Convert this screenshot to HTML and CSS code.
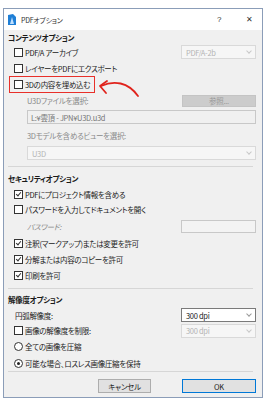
FILE: index.html
```html
<!DOCTYPE html>
<html lang="ja">
<head>
  <meta charset="UTF-8" />
  <title>PDFオプション</title>
  <link rel="stylesheet" href="styles.css">
</head>
<body>
  <div class="window">
    <!-- タイトルバー -->
    <div class="titlebar">
      <svg class="app-icon" width="8" height="11" viewBox="0 0 8 11">
        <path d="M0 1 L5 0 L8 3 L8 11 L0 11 Z" fill="#1f7fd6"/>
        <path d="M4 3 L6 10 L2 10 Z" fill="#bfe0ff"/>
      </svg>
      <span class="title">PDFオプション</span>
      <span class="help">?</span>
      <span class="close">✕</span>
    </div>

    <div class="body">
      <div class="group-title h-content">コンテンツオプション</div>

      <div class="row h16">
        <label class="check"><span class="box"></span>PDF/A アーカイブ</label>
        <div class="combo disabled">PDF/A-2b<span class="chev"></span></div>
      </div>
      <div class="row h16">
        <label class="check"><span class="box"></span>レイヤーをPDFにエクスポート</label>
      </div>
      <div class="row h17 row-mark">
        <label class="check highlight"><span class="box"></span>3Dの内容を埋め込む</label>
        <svg class="arrow" width="44" height="20" viewBox="0 0 44 20">
          <path d="M3 7 C16 1 30 3 40 17" fill="none" stroke="#e0231c" stroke-width="1.8" stroke-linecap="round"/>
          <path d="M9 2 L2 7 L8 14" fill="none" stroke="#e0231c" stroke-width="1.8" stroke-linecap="round" stroke-linejoin="round"/>
        </svg>
      </div>
      <div class="row h15 indent">
        <span class="muted">U3Dファイルを選択:</span>
        <div class="button disabled">参照...</div>
      </div>
      <div class="row h18 indent">
        <div class="field wide">L:¥雲頂 - JPN¥U3D.u3d</div>
      </div>
      <div class="row h19 indent">
        <span class="muted">3Dモデルを含めるビューを選択:</span>
      </div>
      <div class="row h16 indent">
        <div class="combo disabled wide">U3D<span class="chev"></span></div>
      </div>

      <div class="separator"></div>

      <div class="group-title h-security">セキュリティオプション</div>
      <div class="row h16">
        <label class="check"><span class="box checked"></span>PDFにプロジェクト情報を含める</label>
      </div>
      <div class="row h15">
        <label class="check"><span class="box"></span>パスワードを入力してドキュメントを開く</label>
      </div>
      <div class="row h18 indent">
        <span class="muted italic">パスワード:</span>
        <div class="field small"></div>
      </div>
      <div class="row h16">
        <label class="check"><span class="box checked"></span>注釈(マークアップ)または変更を許可</label>
      </div>
      <div class="row h16">
        <label class="check"><span class="box checked"></span>分解または内容のコピーを許可</label>
      </div>
      <div class="row h16">
        <label class="check"><span class="box checked"></span>印刷を許可</label>
      </div>

      <div class="separator"></div>

      <div class="group-title h-res">解像度オプション</div>
      <div class="row h16">
        <span class="plain">円弧解像度:</span>
        <div class="combo">300 dpi<span class="chev"></span></div>
      </div>
      <div class="row h15">
        <label class="check"><span class="box"></span>画像の解像度を制限:</label>
        <div class="combo disabled">300 dpi<span class="chev"></span></div>
      </div>
      <div class="row h17">
        <label class="check"><span class="radio"></span>全ての画像を圧縮</label>
      </div>
      <div class="row h16">
        <label class="check"><span class="radio selected"></span>可能な場合、ロスレス画像圧縮を保持</label>
      </div>

      <div class="separator last"></div>

      <div class="actions">
        <div class="button cancel">キャンセル</div>
        <div class="button ok">OK</div>
      </div>
    </div>
  </div>
</body>
</html>
```

FILE: styles.css
```css
body {
  margin: 0;
  padding: 8px 0 0 3px;
  background: #fff;
  font-family: "Noto Sans CJK JP", "Noto Sans", sans-serif;
  font-size: 7.5px;
  letter-spacing: -0.3px;
  font-feature-settings: "palt";
  color: #1a1a1a;
}

.window {
  width: 258px;
  height: 388px;
  border: 1px solid #8b9db8;
  background: #f0f0f0;
  display: flex;
  flex-direction: column;
}

/* タイトルバー */
.titlebar {
  height: 21px;
  background: #fff;
  display: flex;
  align-items: center;
  padding-left: 4px;
}
.app-icon {
  margin-right: 5px;
}
.title {
  font-size: 7px;
  color: #333;
  flex: 1;
}
.help {
  font-family: "Liberation Sans", sans-serif;
  font-size: 8px;
  color: #333;
  width: 29px;
}
.close {
  font-family: "DejaVu Sans", sans-serif;
  font-size: 8px;
  color: #333;
  width: 16px;
}

.body {
  padding: 0 6px 0 0;
  display: flex;
  flex-direction: column;
}

.group-title {
  font-weight: bold;
  padding-left: 4px;
  display: flex;
  align-items: center;
}
.h-content { height: 14px; }
.h-security { height: 16px; }
.h-res { height: 15px; }

.row {
  display: flex;
  align-items: center;
  justify-content: space-between;
  padding-left: 10px;
}
.row.indent { padding-left: 23px; }
.h15 { height: 15px; }
.h16 { height: 16px; }
.h17 { height: 17px; }
.h18 { height: 18px; }
.h19 { height: 19px; }

.check {
  display: flex;
  align-items: center;
  white-space: nowrap;
}
.plain { padding-left: 1px; }
.muted { color: #8a8a8a; }
.italic { font-style: italic; }

/* チェックボックス・ラジオ */
.box, .radio {
  width: 7px;
  height: 7px;
  border: 1px solid #333;
  background: #fff;
  margin-right: 2px;
  position: relative;
  flex-shrink: 0;
}
.radio { border-radius: 50%; }
.box.checked::after {
  content: "";
  position: absolute;
  left: 2px;
  top: 0;
  width: 2px;
  height: 4px;
  border: solid #333;
  border-width: 0 1px 1px 0;
  transform: rotate(40deg);
}
.radio.selected::after {
  content: "";
  position: absolute;
  left: 2px;
  top: 2px;
  width: 3px;
  height: 3px;
  border-radius: 50%;
  background: #222;
}

/* 強調表示 */
.row-mark {
  position: relative;
  padding-left: 5px;
  justify-content: flex-start;
}
.highlight {
  border: 1px solid #e8302a;
  padding: 2px 4px 2px 4px;
}
.arrow {
  position: absolute;
  left: 94px;
  top: 3px;
}

/* コントロール */
.combo, .field, .button {
  box-sizing: border-box;
  height: 14px;
  display: flex;
  align-items: center;
}
.combo {
  width: 75px;
  padding-left: 4px;
  border: 1px solid #7a7a7a;
  background: #fff;
  position: relative;
}
.combo.disabled {
  border-color: #d9d9d9;
  background: #f6f6f6;
  color: #b4b4b4;
}
.combo.wide, .field.wide {
  width: 229px;
}
.chev {
  position: absolute;
  right: 4px;
  top: 3px;
  width: 3px;
  height: 3px;
  border: solid #9a9a9a;
  border-width: 0 1px 1px 0;
  transform: rotate(45deg);
}
.combo.disabled .chev { border-color: #c8c8c8; }

.field {
  border: 1px solid #c8c8c8;
  background: #f0f0f0;
  color: #777;
  padding-left: 3px;
}
.field.small {
  width: 75px;
  height: 13px;
  background: #f3f3f3;
}

.button {
  justify-content: center;
  border: 1px solid #adadad;
  background: #e1e1e1;
}
.button.disabled {
  width: 74px;
  height: 12px;
  border-color: #c4c4c4;
  background: #cccccc;
  color: #9a9a9a;
}

.separator {
  margin: 5px 3px 3px 4px;
  border-top: 1px solid #d6d6d6;
}
.separator.last {
  margin: 0 3px 0 4px;
}

.actions {
  display: flex;
  justify-content: flex-end;
  gap: 31px;
  padding-top: 7px;
}
.button.cancel {
  width: 53px;
}
.button.ok {
  width: 74px;
  border-color: #0078d7;
}
```
